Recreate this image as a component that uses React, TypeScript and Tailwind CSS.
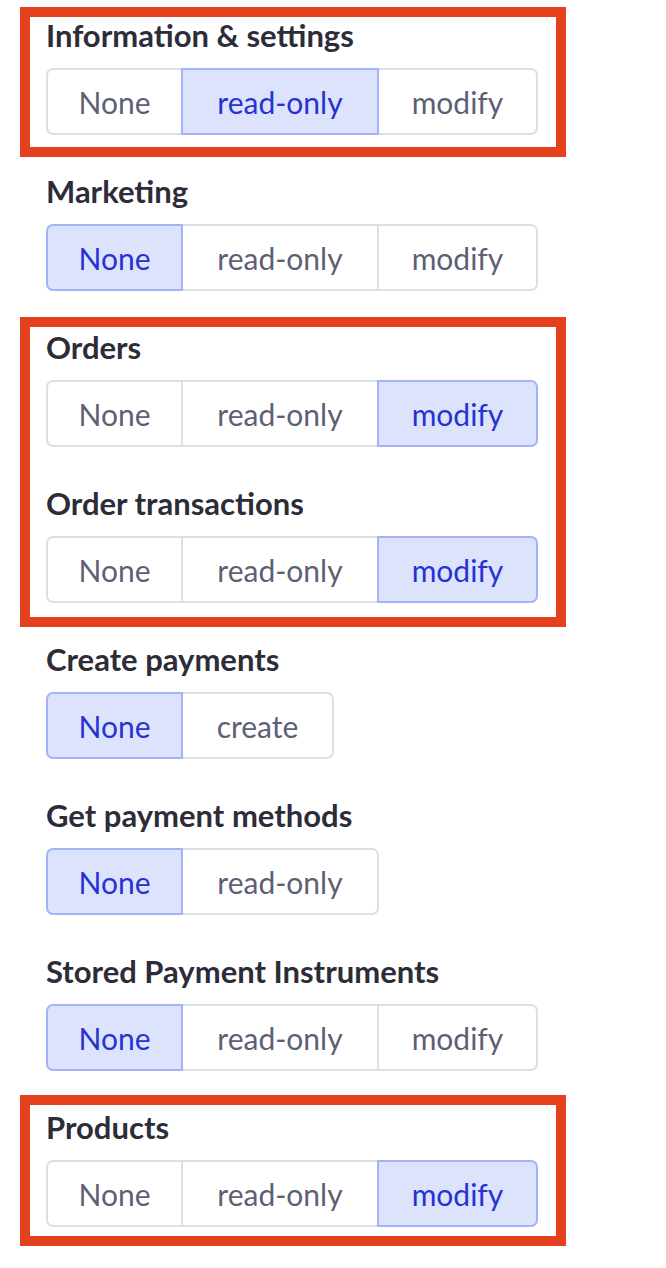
type Section = {
  label: string;
  options: string[];
  active: number;
};

const sections: Section[] = [
  { label: "Information & settings", options: ["None", "read-only", "modify"], active: 1 },
  { label: "Marketing", options: ["None", "read-only", "modify"], active: 0 },
  { label: "Orders", options: ["None", "read-only", "modify"], active: 2 },
  { label: "Order transactions", options: ["None", "read-only", "modify"], active: 2 },
  { label: "Create payments", options: ["None", "create"], active: 0 },
  { label: "Get payment methods", options: ["None", "read-only"], active: 0 },
  { label: "Stored Payment Instruments", options: ["None", "read-only", "modify"], active: 0 },
  { label: "Products", options: ["None", "read-only", "modify"], active: 2 },
];

const widths: Record<string, string> = {
  None: "w-[137px]",
  "read-only": "w-[198px]",
  modify: "w-[161px]",
  create: "w-[153px]",
};

const Segmented = ({ options, active }: { options: string[]; active: number }) => {
  return (
    <div className="flex w-fit">
      {options.map((opt, i) => {
        const on = i === active;
        const first = i === 0;
        const last = i === options.length - 1;
        return (
          <div
            key={opt}
            className={[
              "relative flex h-[67px] items-center justify-center border-2 text-[30px] leading-none",
              widths[opt],
              first ? "rounded-l-[7px]" : "-ml-[2px]",
              last ? "rounded-r-[7px]" : "",
              on
                ? "z-10 border-[#a3b3f5] bg-[#dde3fc] text-[#2533d1]"
                : "border-[#dcdee8] bg-white text-[#5d5f76]",
            ].join(" ")}
          >
            {opt}
          </div>
        );
      })}
    </div>
  );
};

const Block = ({ s }: { s: Section }) => (
  <div className="flex flex-col">
    <h3 className="h-[36px] text-[31px] font-bold leading-[36px] text-[#2c2d38]">{s.label}</h3>
    <div className="mt-[15px]">
      <Segmented options={s.options} active={s.active} />
    </div>
  </div>
);

const App = () => {
  return (
    <div className="min-h-[1268px] w-[666px] bg-white pl-[46px] pt-[17px] font-['Lato',sans-serif]">
      <div className="flex w-[492px] flex-col gap-[38px]">
        <div className="relative">
          <Block s={sections[0]} />
          <div className="pointer-events-none absolute -top-[10px] -bottom-[22px] -left-[26px] -right-[28px] border-[10px] border-[#e6411f]" />
        </div>
        <Block s={sections[1]} />
        <div className="relative flex flex-col gap-[38px]">
          <Block s={sections[2]} />
          <Block s={sections[3]} />
          <div className="pointer-events-none absolute -top-[12px] -bottom-[24px] -left-[26px] -right-[28px] border-[10px] border-[#e6411f]" />
        </div>
        <Block s={sections[4]} />
        <Block s={sections[5]} />
        <Block s={sections[6]} />
        <div className="relative">
          <Block s={sections[7]} />
          <div className="pointer-events-none absolute -top-[14px] -bottom-[19px] -left-[26px] -right-[28px] border-[10px] border-[#e6411f]" />
        </div>
      </div>
    </div>
  );
};

export default App;
